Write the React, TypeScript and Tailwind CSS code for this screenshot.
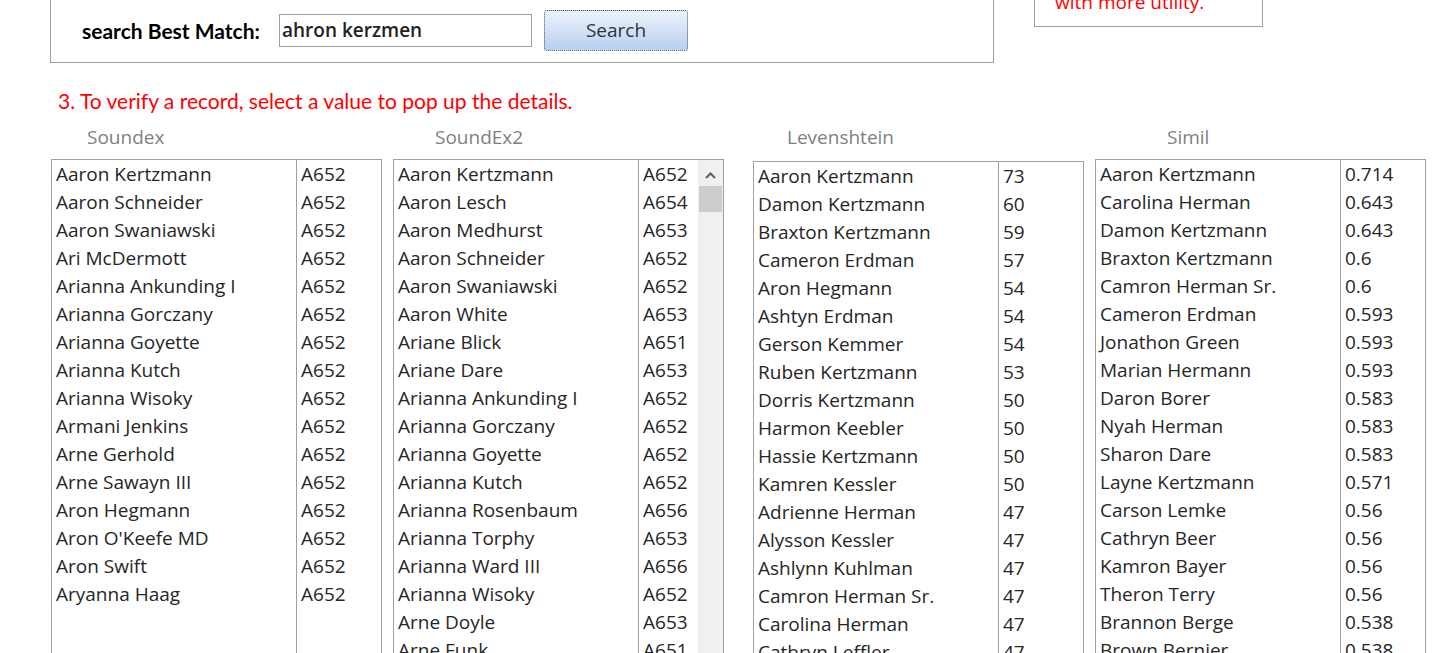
import React from "react";

type Row = [string, string];

const soundex: Row[] = [
  ["Aaron Kertzmann", "A652"],
  ["Aaron Schneider", "A652"],
  ["Aaron Swaniawski", "A652"],
  ["Ari McDermott", "A652"],
  ["Arianna Ankunding I", "A652"],
  ["Arianna Gorczany", "A652"],
  ["Arianna Goyette", "A652"],
  ["Arianna Kutch", "A652"],
  ["Arianna Wisoky", "A652"],
  ["Armani Jenkins", "A652"],
  ["Arne Gerhold", "A652"],
  ["Arne Sawayn III", "A652"],
  ["Aron Hegmann", "A652"],
  ["Aron O'Keefe MD", "A652"],
  ["Aron Swift", "A652"],
  ["Aryanna Haag", "A652"],
];

const soundex2: Row[] = [
  ["Aaron Kertzmann", "A652"],
  ["Aaron Lesch", "A654"],
  ["Aaron Medhurst", "A653"],
  ["Aaron Schneider", "A652"],
  ["Aaron Swaniawski", "A652"],
  ["Aaron White", "A653"],
  ["Ariane Blick", "A651"],
  ["Ariane Dare", "A653"],
  ["Arianna Ankunding I", "A652"],
  ["Arianna Gorczany", "A652"],
  ["Arianna Goyette", "A652"],
  ["Arianna Kutch", "A652"],
  ["Arianna Rosenbaum", "A656"],
  ["Arianna Torphy", "A653"],
  ["Arianna Ward III", "A656"],
  ["Arianna Wisoky", "A652"],
  ["Arne Doyle", "A653"],
  ["Arne Funk", "A651"],
];

const levenshtein: Row[] = [
  ["Aaron Kertzmann", "73"],
  ["Damon Kertzmann", "60"],
  ["Braxton Kertzmann", "59"],
  ["Cameron Erdman", "57"],
  ["Aron Hegmann", "54"],
  ["Ashtyn Erdman", "54"],
  ["Gerson Kemmer", "54"],
  ["Ruben Kertzmann", "53"],
  ["Dorris Kertzmann", "50"],
  ["Harmon Keebler", "50"],
  ["Hassie Kertzmann", "50"],
  ["Kamren Kessler", "50"],
  ["Adrienne Herman", "47"],
  ["Alysson Kessler", "47"],
  ["Ashlynn Kuhlman", "47"],
  ["Camron Herman Sr.", "47"],
  ["Carolina Herman", "47"],
  ["Cathryn Leffler", "47"],
];

const simil: Row[] = [
  ["Aaron Kertzmann", "0.714"],
  ["Carolina Herman", "0.643"],
  ["Damon Kertzmann", "0.643"],
  ["Braxton Kertzmann", "0.6"],
  ["Camron Herman Sr.", "0.6"],
  ["Cameron Erdman", "0.593"],
  ["Jonathon Green", "0.593"],
  ["Marian Hermann", "0.593"],
  ["Daron Borer", "0.583"],
  ["Nyah Herman", "0.583"],
  ["Sharon Dare", "0.583"],
  ["Layne Kertzmann", "0.571"],
  ["Carson Lemke", "0.56"],
  ["Cathryn Beer", "0.56"],
  ["Kamron Bayer", "0.56"],
  ["Theron Terry", "0.56"],
  ["Brannon Berge", "0.538"],
  ["Brown Bernier", "0.538"],
];

const listFont = { fontFamily: '"Open Sans", "Noto Sans", sans-serif' };
const latoFont = { fontFamily: 'Lato, "Open Sans", sans-serif' };

function ListBox({ rows, scroll }: { rows: Row[]; scroll?: boolean }) {
  return (
    <div className="flex h-[520px] w-[331px] border border-[#a0a0a0] bg-white text-[19px] leading-[28px] text-[#262626]" style={listFont}>
      <div className="w-[245px] shrink-0 border-r border-[#a0a0a0] pl-[4px]">
        {rows.map((r, i) => (
          <div key={i} className="h-[28px] whitespace-nowrap">{r[0]}</div>
        ))}
      </div>
      <div className="flex-1 pl-[4px]">
        {rows.map((r, i) => (
          <div key={i} className="h-[28px] whitespace-nowrap">{r[1]}</div>
        ))}
      </div>
      {scroll && (
        <div className="flex w-[25px] shrink-0 flex-col bg-[#f0f0f0]">
          <div className="flex h-[26px] items-center justify-center pt-[4px]">
            <svg width="11" height="7" viewBox="0 0 11 7">
              <path d="M1 6 L5.5 1.5 L10 6" fill="none" stroke="#606060" strokeWidth="2" />
            </svg>
          </div>
          <div className="mx-[1px] h-[26px] bg-[#cdcdcd]" />
        </div>
      )}
    </div>
  );
}

export default function App() {
  return (
    <div className="relative h-[653px] w-[1432px] overflow-hidden bg-white">
      {/* top row */}
      <div className="flex items-start">
        <div className="ml-[50px] h-[63px] w-[944px] overflow-hidden border-x border-b border-[#a0a0a0]">
          <div className="-mt-[23px] h-[24px] overflow-hidden whitespace-nowrap pl-[8px] text-[21px] leading-[24px] text-[#ff0000]" style={latoFont}>
            1. Enter: Ahron Kertz, Ari, Aaron Medhurst, Dare, then Search
          </div>
          <div className="mt-[9px] flex h-[41px] items-center pl-[31px]">
            <div className="w-[197px] text-[21px] font-bold text-black" style={latoFont}>search Best Match:</div>
            <div className="flex h-[33px] w-[253px] items-center border border-[#a0a0a0] pl-[2px] text-[19px] font-semibold text-[#222]" style={listFont}>
              ahron kerzmen
            </div>
            <div className="ml-[12px] flex h-[41px] w-[144px] items-center justify-center rounded-[3px] border border-dotted border-[#4a5a78] bg-gradient-to-b from-[#eef3fb] to-[#b8cff0] text-[19px] text-[#333]" style={listFont}>
              Search
            </div>
          </div>
        </div>
        <div className="ml-[40px] h-[27px] w-[229px] overflow-hidden border-x border-b border-[#a0a0a0]">
          <div className="-mt-[10px] pl-[20px] text-[19px] leading-[24px] text-[#ff0000]" style={listFont}>
            with more utility.
          </div>
        </div>
      </div>

      {/* instruction */}
      <div className="ml-[58px] mt-[25px] text-[21px] leading-[26px] text-[#ff0000]" style={latoFont}>
        3. To verify a record, select a value to pop up the details.
      </div>

      {/* headings */}
      <div className="mt-[11px] flex h-[24px] text-[19px] leading-[24px] text-[#7f7f7f]" style={listFont}>
        <div className="ml-[87px] w-[348px]">Soundex</div>
        <div className="w-[352px]">SoundEx2</div>
        <div className="w-[380px]">Levenshtein</div>
        <div>Simil</div>
      </div>

      {/* lists */}
      <div className="ml-[51px] mt-[10px] flex items-start">
        <ListBox rows={soundex} />
        <div className="ml-[11px]">
          <ListBox rows={soundex2} scroll />
        </div>
        <div className="ml-[29px] mt-[2px]">
          <ListBox rows={levenshtein} />
        </div>
        <div className="ml-[11px]">
          <ListBox rows={simil} />
        </div>
      </div>
    </div>
  );
}
